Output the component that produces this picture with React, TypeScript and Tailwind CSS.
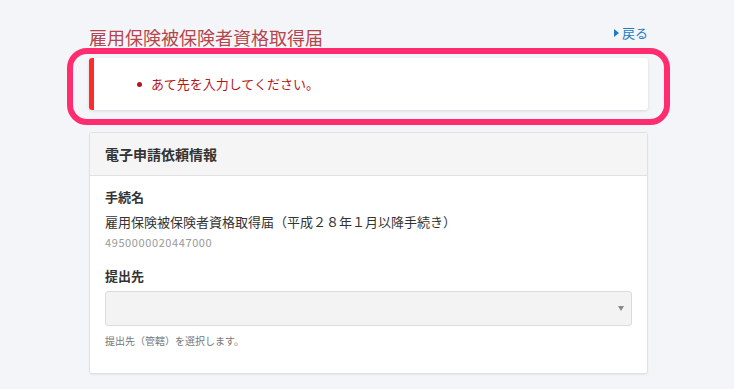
import React from 'react';

const jp = { fontFamily: '"Noto Sans CJK JP", "Noto Sans", sans-serif' };

export default function App() {
  return (
    <div className="min-h-screen bg-[#f4f5f9] pt-[25px]" style={jp}>
      <div className="ml-[89px] w-[559px]">
        {/* Title row */}
        <div className="flex items-start justify-between">
          <h1 className="text-[18px] leading-[24px] text-[#b4474d]">雇用保険被保険者資格取得届</h1>
          <a href="#" className="mt-[-1px] flex items-center gap-[3px] text-[13px] leading-[18px] text-[#1b7cc4]">
            <span className="inline-block h-0 w-0 border-y-[4px] border-l-[5px] border-y-transparent border-l-[#1b7cc4]" />
            戻る
          </a>
        </div>

        {/* Error alert */}
        <div className="relative mt-[9px]">
          <div className="flex h-[52px] items-center rounded-[3px] border-l-[5px] border-[#ff2a2a] bg-white pl-[43px] shadow-[0_1px_3px_rgba(0,0,0,0.12)]">
            <span className="h-[5px] w-[5px] rounded-full bg-[#b3161d]" />
            <span className="ml-[9px] text-[13px] leading-[18px] text-[#b3161d]">あて先を入力してください。</span>
          </div>
          <div className="pointer-events-none absolute -bottom-[15px] -left-[22px] -right-[22px] -top-[10px] rounded-[20px] border-[6px] border-[#ff2d6f]" />
        </div>

        {/* Card */}
        <div className="mt-[22px] overflow-hidden rounded-[3px] border border-[#e1e1e4] bg-white shadow-[0_1px_2px_rgba(0,0,0,0.06)]">
          <div className="flex h-[43px] items-center border-b border-[#e1e1e4] bg-[#f5f5f5] px-[15px]">
            <h2 className="text-[14px] font-bold text-[#333]">電子申請依頼情報</h2>
          </div>
          <div className="px-[15px] pb-[25px] pt-[12px]">
            <div className="text-[13px] font-bold leading-[18px] text-[#333]">手続名</div>
            <div className="mt-[7px] text-[13px] leading-[18px] text-[#333]">雇用保険被保険者資格取得届（平成２８年１月以降手続き）</div>
            <div className="mt-[4px] text-[11px] leading-[14px] tracking-[0.6px] text-[#999]">4950000020447000</div>

            <div className="mt-[18px] text-[13px] font-bold leading-[18px] text-[#333]">提出先</div>
            <div className="mt-[6px] flex h-[35px] items-center justify-end rounded-[3px] border border-[#dcdcdc] bg-[#f3f3f3] pr-[7px]">
              <span className="inline-block h-0 w-0 border-x-[3.5px] border-t-[5px] border-x-transparent border-t-[#888]" />
            </div>
            <div className="mt-[8px] text-[10px] leading-[14px] text-[#777]">提出先（管轄）を選択します。</div>
          </div>
        </div>
      </div>
    </div>
  );
}
